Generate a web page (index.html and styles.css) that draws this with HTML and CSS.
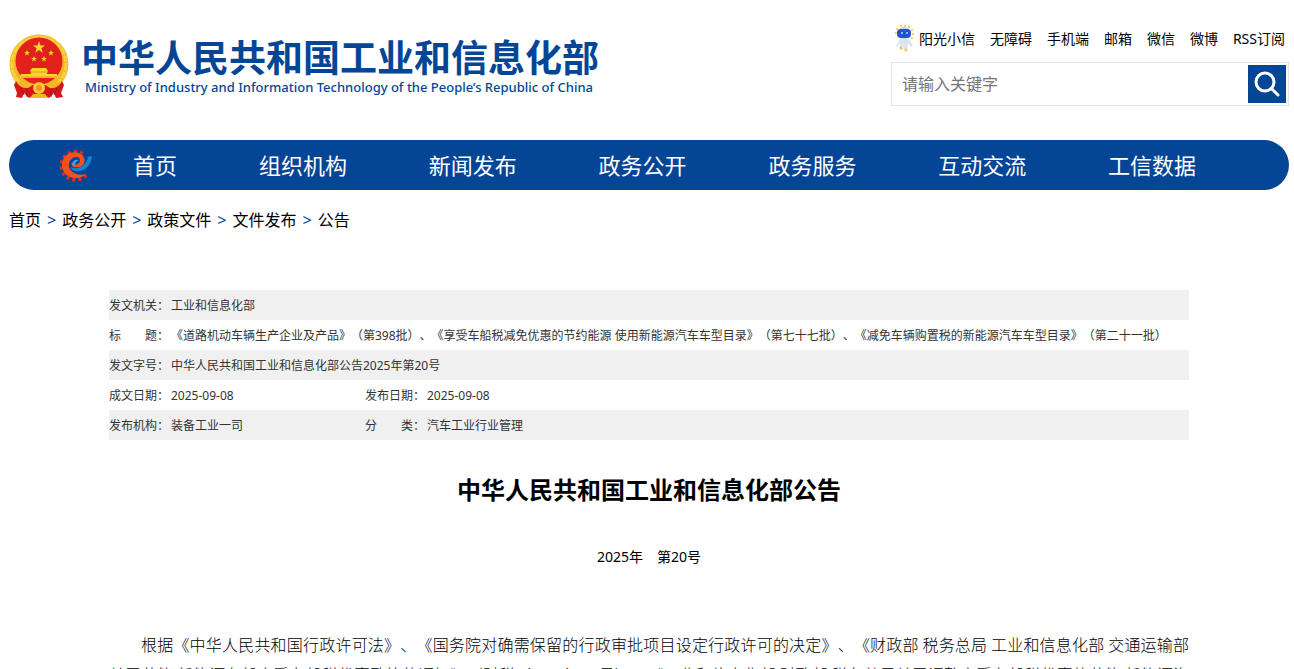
FILE: index.html
```
<!DOCTYPE html>
<html lang="zh-CN">
<head>
<meta charset="UTF-8">
<meta name="viewport" content="width=device-width, initial-scale=1.0">
<title>中华人民共和国工业和信息化部公告</title>
<link rel="stylesheet" href="styles.css">
</head>
<body>
  <div class="page">
    <header class="header">
      <a class="logo" href="#">
        <svg class="emblem" viewBox="0 0 60 66" aria-hidden="true">
          <circle cx="30" cy="30" r="29.5" fill="#f3b723"/>
          <circle cx="30" cy="30" r="27" fill="none" stroke="#f9d23f" stroke-width="3" stroke-dasharray="7 1"/>
          <circle cx="30" cy="27" r="23.500" fill="#e4201c"/>
          <g fill="#fbd72b">
            <path d="M30 7l1.500 4.500h4.500l-3.600 2.800 1.300 4.500-3.700-2.700-3.700 2.700 1.300-4.500-3.600-2.800h4.500z"/>
            <path d="M18 16l.8 2h2.100l-1.700 1.300.6 2.100-1.800-1.200-1.800 1.200.6-2.100-1.700-1.300h2.100z"/>
            <path d="M42 16l.8 2h2.100l-1.700 1.300.6 2.100-1.800-1.200-1.800 1.200.6-2.100-1.700-1.300h2.100z"/>
            <path d="M25 22l.8 2h2.100l-1.700 1.300.6 2.100-1.800-1.200-1.800 1.200.6-2.100-1.700-1.300h2.100z"/>
            <path d="M35 22l.8 2h2.100l-1.700 1.300.6 2.100-1.800-1.200-1.800 1.200.6-2.100-1.700-1.300h2.100z"/>
            <path d="M23 34h14l2 3-1 1v2h10l1 4H11l1-4h10v-2l-1-1z"/>
          </g>
          <path d="M21 38h18M12 43h36" stroke="#e8961c" stroke-width="1"/>
          <path d="M8 47q22 9 44 0l-8 10H16z" fill="#f3b81f"/>
          <path d="M7 47q4 8 12 7l5-3h12l5 3q8 1 12-7l2 4-3 8 2 4-7 1-2-5-5 5-5-3H25l-5 3-5-5-2 5-6-1 1-4-3-8z" fill="#d5161b"/>
          <path d="M12 54l3 7M48 54l-3 7M18 56v7M42 56v7" stroke="#9e1316" stroke-width="1"/>
          <circle cx="30" cy="54" r="6" fill="#f9cc2e"/>
          <circle cx="30" cy="54" r="3" fill="#e79a1d"/>
          <path d="M24 60h12l3 4H21z" fill="#f1b51f"/>
        </svg>
        <span class="logo-text">
          <span class="logo-cn">中华人民共和国工业和信息化部</span>
          <span class="logo-en">Ministry of Industry and Information Technology of the People’s Republic of China</span>
        </span>
      </a>

      <div class="tools">
        <nav class="top-links">
          <a class="robot-link" href="#">
            <svg class="robot" viewBox="0 0 22 28" aria-hidden="true">
              <g fill="#f5c52c">
                <circle cx="11" cy="2" r="1"/><circle cx="7" cy="2" r="1"/><circle cx="15" cy="3" r="1"/>
                <circle cx="3" cy="5" r="1"/><circle cx="18" cy="6" r="1"/><circle cx="2" cy="9" r="1"/>
                <circle cx="19" cy="10" r="1"/><circle cx="18" cy="14" r="1"/>
              </g>
              <ellipse cx="10" cy="9" rx="7" ry="6" fill="#c3d3f5"/>
              <rect x="3" y="5" width="14" height="9" rx="4" fill="#2452cf"/>
              <path d="M7 9h2M12 9h2" stroke="#79c4ff" stroke-width="2"/>
              <path d="M6 15h9l4 7-2 1-3-4-1 7h-3l-1-4-1 4H6V19l-3 4-1-1z" fill="#dbe4f1"/>
              <path d="M6 23l2 2M11 27l2-2" stroke="#f5c52c" stroke-width="2"/>
            </svg>
            阳光小信
          </a>
          <a href="#">无障碍</a>
          <a href="#">手机端</a>
          <a href="#">邮箱</a>
          <a href="#">微信</a>
          <a href="#">微博</a>
          <a href="#">RSS订阅</a>
        </nav>
        <form class="search">
          <input class="search-input" type="text" placeholder="请输入关键字" aria-label="请输入关键字">
          <button class="search-btn" type="button" aria-label="搜索">
            <svg viewBox="0 0 38 38" fill="none" stroke="#fff" stroke-width="3" stroke-linecap="round" aria-hidden="true">
              <circle cx="17" cy="17" r="9"/>
              <path d="M24 24l6 6"/>
            </svg>
          </button>
        </form>
      </div>
    </header>

    <nav class="nav">
      <svg class="nav-logo" viewBox="0 0 33 33" aria-hidden="true">
        <path d="M27 26A14 14 0 1 1 24 5" fill="none" stroke="#d92f20" stroke-width="4" stroke-dasharray="3 3"/>
        <path d="M27 25C20 33 3 29 3 16C3 6 12 1 20 4C28 7 27 17 20 18C15 19 11 17 13 13C14 17 21 16 21 11C21 6 12 7 10 14C8 22 18 28 27 25z" fill="#f4511e"/>
        <path d="M12 18C17 21 26 18 29 9L27 8L33 7C33 16 24 24 16 22C13 21 12 20 12 18z" fill="#1283d2"/>
        <path d="M13 15C14 11 17 10 20 11C17 12 16 14 16 17z" fill="#36a6e8"/>
      </svg>
      <a class="nav-home" href="#">首页</a>
      <a href="#">组织机构</a>
      <a href="#">新闻发布</a>
      <a href="#">政务公开</a>
      <a href="#">政务服务</a>
      <a href="#">互动交流</a>
      <a href="#">工信数据</a>
    </nav>

    <div class="crumbs">
      <a href="#">首页</a>
      <span>&gt;</span>
      <a href="#">政务公开</a>
      <span>&gt;</span>
      <a href="#">政策文件</a>
      <span>&gt;</span>
      <a href="#">文件发布</a>
      <span>&gt;</span>
      <a href="#">公告</a>
    </div>

    <main class="article">
      <table class="info">
        <colgroup>
          <col class="col-label">
          <col class="col-value">
          <col class="col-label">
          <col>
        </colgroup>
        <tr>
          <th>发文机关：</th>
          <td colspan="3">工业和信息化部</td>
        </tr>
        <tr>
          <th>标　　题：</th>
          <td colspan="3">《道路机动车辆生产企业及产品》（第398批）、《享受车船税减免优惠的节约能源 使用新能源汽车车型目录》（第七十七批）、《减免车辆购置税的新能源汽车车型目录》（第二十一批）</td>
        </tr>
        <tr>
          <th>发文字号：</th>
          <td colspan="3">中华人民共和国工业和信息化部公告2025年第20号</td>
        </tr>
        <tr>
          <th>成文日期：</th>
          <td>2025-09-08</td>
          <th>发布日期：</th>
          <td>2025-09-08</td>
        </tr>
        <tr>
          <th>发布机构：</th>
          <td>装备工业一司</td>
          <th>分　　类：</th>
          <td>汽车工业行业管理</td>
        </tr>
      </table>

      <h1 class="title">中华人民共和国工业和信息化部公告</h1>
      <p class="number">2025年　第20号</p>
      <p class="text">根据《中华人民共和国行政许可法》、《国务院对确需保留的行政审批项目设定行政许可的决定》、《财政部 税务总局 工业和信息化部 交通运输部关于节能 新能源车船享受车船税优惠政策的通知》（财税〔2018〕74号）、《工业和信息化部 财政部 税务总局关于调整享受车船税优惠的节能 新能源汽车产品技术要求的公告》</p>
    </main>
  </div>
</body>
</html>
```
FILE: styles.css
```
* {
  box-sizing: border-box;
}

body {
  margin: 0;
  font-family: "Noto Sans", "Noto Sans CJK SC", sans-serif;
  font-size: 16px;
  color: #000;
  background-color: #fff;
  text-spacing-trim: space-all;
}

a {
  color: inherit;
  text-decoration: none;
}

.page {
  padding: 0 5px 0 9px;
}

/* Header */
.header {
  display: flex;
  justify-content: space-between;
  height: 140px;
}

.logo {
  display: flex;
  align-items: flex-start;
  gap: 12px;
  padding-top: 34px;
  color: #044695;
}

.emblem {
  width: 60px;
  height: 66px;
}

.logo-text {
  display: flex;
  flex-direction: column;
  white-space: nowrap;
}

.logo-cn {
  font-family: "Noto Sans CJK SC", sans-serif;
  font-size: 37px;
  font-weight: 700;
  line-height: 44px;
}

.logo-en {
  padding-left: 4px;
  font-size: 13px;
  font-weight: 500;
  line-height: 18px;
}

.tools {
  width: 398px;
  padding-top: 23px;
}

.top-links {
  display: flex;
  align-items: center;
  justify-content: flex-end;
  gap: 15px;
  height: 30px;
  padding-right: 4px;
  font-size: 14px;
  white-space: nowrap;
}

.robot-link {
  display: flex;
  align-items: center;
  gap: 3px;
}

.robot {
  width: 22px;
  height: 28px;
}

.search {
  display: flex;
  height: 44px;
  margin-top: 9px;
  padding: 2px;
  border: 1px solid #e5e5e5;
}

.search-input {
  flex: 1;
  min-width: 0;
  padding: 0 8px;
  border: 0;
  outline: 0;
  font-family: inherit;
  font-size: 16px;
}

.search-input::placeholder {
  color: #757575;
}

.search-btn {
  width: 38px;
  height: 38px;
  padding: 0;
  border: 0;
  background-color: #044695;
}

.search-btn svg {
  display: block;
}

/* Main navigation */
.nav {
  display: flex;
  align-items: center;
  height: 50px;
  padding: 0 52px 0 50px;
  border-radius: 25px;
  background-color: #044695;
  color: #fff;
  font-size: 22px;
}

.nav-logo {
  width: 33px;
  height: 33px;
}

.nav a {
  flex: 1;
  text-align: center;
  line-height: 50px;
}

.nav .nav-home {
  flex: 0 0 126px;
}

.crumbs {
  display: flex;
  gap: 6px;
  padding-top: 15px;
  line-height: 30px;
}

.crumbs span {
  color: #044695;
}

/* Article */
.article {
  padding: 55px 100px 0;
}

.info {
  width: 100%;
  table-layout: fixed;
  border-collapse: collapse;
  color: #333;
  font-size: 12px;
}

.info tr:nth-child(odd) {
  background-color: #f0f0f0;
}

.info th,
.info td {
  height: 30px;
  padding: 0;
  font-weight: 400;
  text-align: left;
  white-space: nowrap;
}

.col-label {
  width: 62px;
}

.col-value {
  width: 194px;
}

.title {
  margin: 30px 0 0;
  font-size: 24px;
  line-height: 40px;
  text-align: center;
}

.number {
  margin: 32px 0 0;
  font-size: 14px;
  line-height: 30px;
  text-align: center;
}

.text {
  margin: 57px 0 0;
  font-family: "Noto Sans CJK SC", sans-serif;
  font-weight: 300;
  line-height: 30px;
  text-align: justify;
  text-indent: 2em;
}
```
